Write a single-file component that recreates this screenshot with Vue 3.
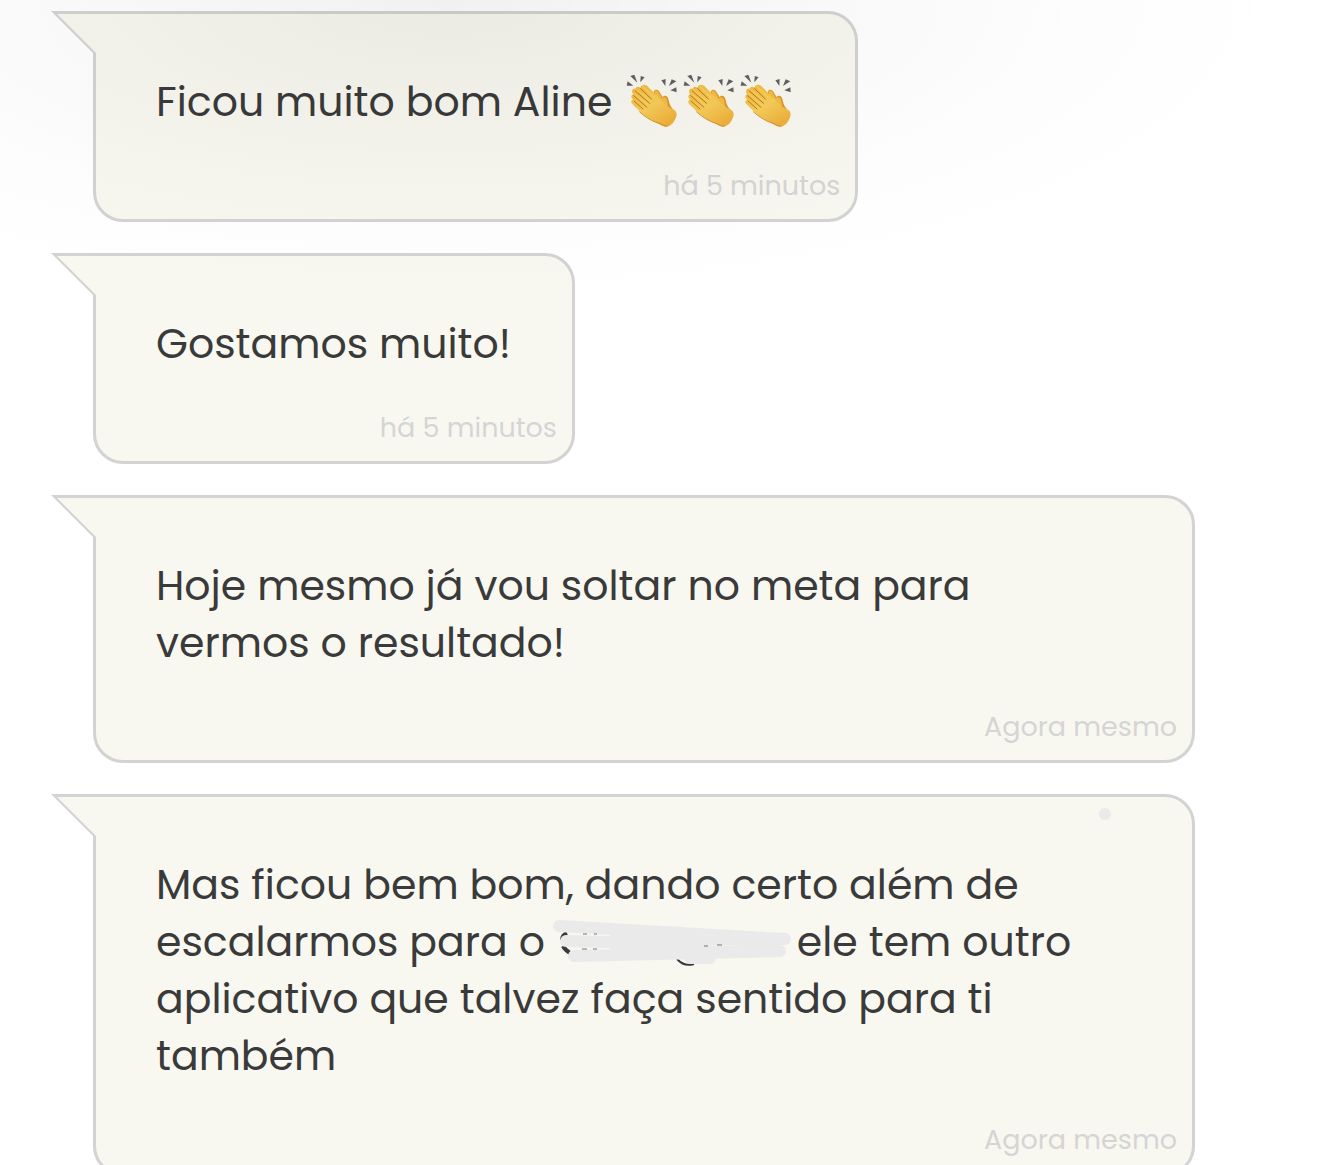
<script setup>
const messages = [
  { id: 1, lines: ['Ficou muito bom Aline '], claps: 3, time: 'há 5 minutos' },
  { id: 2, lines: ['Gostamos muito!'], time: 'há 5 minutos' },
  {
    id: 3,
    lines: ['Hoje mesmo já vou soltar no meta para', 'vermos o resultado!'],
    time: 'Agora mesmo',
    wide: true,
  },
  {
    id: 4,
    lines: [
      'Mas ficou bem bom, dando certo além de',
      'escalarmos para o ',
      'aplicativo que talvez faça sentido para ti',
      'também',
    ],
    hidden: { line: 1, after: ' ele tem outro' },
    time: 'Agora mesmo',
    wide: true,
    dot: true,
  },
];
</script>

<template>
  <main class="chat">
    <article
      v-for="message in messages"
      :key="message.id"
      class="bubble"
      :class="{ wide: message.wide }"
    >
      <svg class="tail" viewBox="0 0 45 42" aria-hidden="true">
        <path d="M0 0H45V42H42Z" fill="#d3d3d3" />
        <path d="M6 3H45V42Z" fill="#f8f8f0" />
      </svg>
      <span v-if="message.dot" class="dot"></span>

      <p class="text">
        <span v-for="(line, i) in message.lines" :key="i" class="line"
          >{{ line
          }}<svg
            v-for="n in i === 0 ? message.claps || 0 : 0"
            :key="n"
            class="clap"
            viewBox="12 24 171 171"
            aria-hidden="true"
          >
            <defs>
              <linearGradient id="skin" x1="0" y1="0" x2="0.7" y2="1">
                <stop offset="0" stop-color="#f2b73c" />
                <stop offset="0.55" stop-color="#f8cd58" />
                <stop offset="1" stop-color="#f0b03c" />
              </linearGradient>
            </defs>
            <g fill="#626262">
              <path d="M34 33L46 29L55 53Z" />
              <path d="M65 33L77 37L64 52Z" />
              <path d="M26 49L43 62L23 62Z" />
              <path d="M127 46L140 42L139 63Z" />
              <path d="M150 63L158 43L172 49Z" />
              <path d="M154 76L172 67L173 82Z" />
            </g>
            <path
              d="M104 80C108 71 119 74 122 82L131 97C136 89 145 92 148 102C151 115 153 124 161 131L140 184C128 184 124 178 112 172L104 168Z"
              fill="#dc982b"
            />
            <path
              d="M106 79C110 74 117 77 120 84L129 101C134 94 142 96 144 105L147 124L118 118Z"
              fill="#f4bd43"
            />
            <path
              d="M64 68C68 56 82 57 89 67L132 111C143 121 151 129 161 132C173 137 175 147 171 157C166 171 158 183 143 185C134 185 131 180 122 176C96 169 75 151 61 138L42 119C34 112 36 105 43 105C34 96 36 88 43 89C36 79 40 69 50 71C52 64 58 63 64 68Z"
              fill="url(#skin)"
            />
            <g fill="none" stroke="#bd7a22" stroke-width="3" stroke-linecap="round">
              <path d="M65 71L97 102" />
              <path d="M49 78L92 115" />
              <path d="M44 92L84 127" />
              <path d="M45 108L72 132" />
            </g>
            <path
              d="M70 63L106 98M53 74L94 109M46 85L86 120"
              fill="none"
              stroke="#fbd76c"
              stroke-width="4"
              stroke-linecap="round"
              opacity="0.6"
            />
            <path
              d="M61 140C83 160 105 171 123 176C133 182 138 184 146 183"
              fill="none"
              stroke="#d8922f"
              stroke-width="3"
            /></svg
          ><template v-if="message.hidden && message.hidden.line === i"
            ><svg class="scribble" viewBox="6 0 230 57" aria-hidden="true">
              <g fill="none" stroke="#3a3a3a" stroke-width="4">
                <path d="M17 20Q12 22 12 27" />
                <path d="M13 33Q15 37 20 40" />
                <path d="M127 46Q134 54 144 51" stroke-width="2" />
              </g>
              <g
                fill="none"
                stroke="#eaeaea"
                stroke-width="12"
                stroke-linecap="round"
                stroke-linejoin="round"
              >
                <path d="M9 13L235 26L65 27" />
                <path d="M16 28L100 30" />
                <path d="M24 43L230 38M140 45L160 45" />
              </g>
              <path d="M60 20L160 24V33L230 31V40L60 42Z" fill="#eaeaea" />
              <path
                d="M33 21H37M44 21H47M32 36H37M43 36H47M154 33H158M167 32H172"
                fill="none"
                stroke="#777"
                stroke-width="1"
              /></svg
            >{{ message.hidden.after }}</template
          ></span
        >
      </p>
      <time class="time">{{ message.time }}</time>
    </article>
  </main>
</template>

<style>
body {
  margin: 0;
  background: #fff;
  overflow: hidden;
}
</style>

<style scoped>
.chat {
  position: relative;
  display: flex;
  flex-direction: column;
  align-items: flex-start;
  gap: 31px;
  height: 100vh;
  padding: 11px 125px 0 93px;
  box-sizing: border-box;
  overflow: hidden;
  font-family: Poppins, Inter, 'Open Sans', sans-serif;
}

/* soft shade falling from the top edge */
.chat::after {
  content: '';
  position: absolute;
  inset: 0 0 auto;
  height: 310px;
  background: radial-gradient(
    ellipse 65% 100% at 34% 0,
    rgba(0, 0, 0, 0.055),
    rgba(0, 0, 0, 0.028) 40%,
    rgba(0, 0, 0, 0.008) 75%,
    transparent
  );
  pointer-events: none;
}

.bubble {
  position: relative;
  display: flex;
  flex-direction: column;
  flex-shrink: 0;
  box-sizing: border-box;
  max-width: 100%;
  padding: 59px 15px 12px 60px;
  border: 3px solid #d3d3d3;
  border-radius: 0 30px 30px 30px;
  background: #f8f8f0;
}

.bubble.wide {
  width: 100%;
}

.tail {
  position: absolute;
  top: -3px;
  left: -45px;
  width: 45px;
  height: 42px;
}

.dot {
  position: absolute;
  top: 11px;
  right: 81px;
  width: 12px;
  height: 12px;
  border-radius: 50%;
  background: #eaeaea;
}

.text {
  margin: 0 46px 35px 0;
  color: #3a3a3a;
  font-size: 41px;
  line-height: 57px;
}

.line {
  display: block;
  white-space: pre;
}

.clap {
  width: 57px;
  height: 57px;
  vertical-align: top;
}

.scribble {
  width: 230px;
  height: 57px;
  vertical-align: top;
  overflow: visible;
}

.time {
  align-self: flex-end;
  color: #d5d5d5;
  font-size: 27px;
  line-height: 42px;
}
</style>
